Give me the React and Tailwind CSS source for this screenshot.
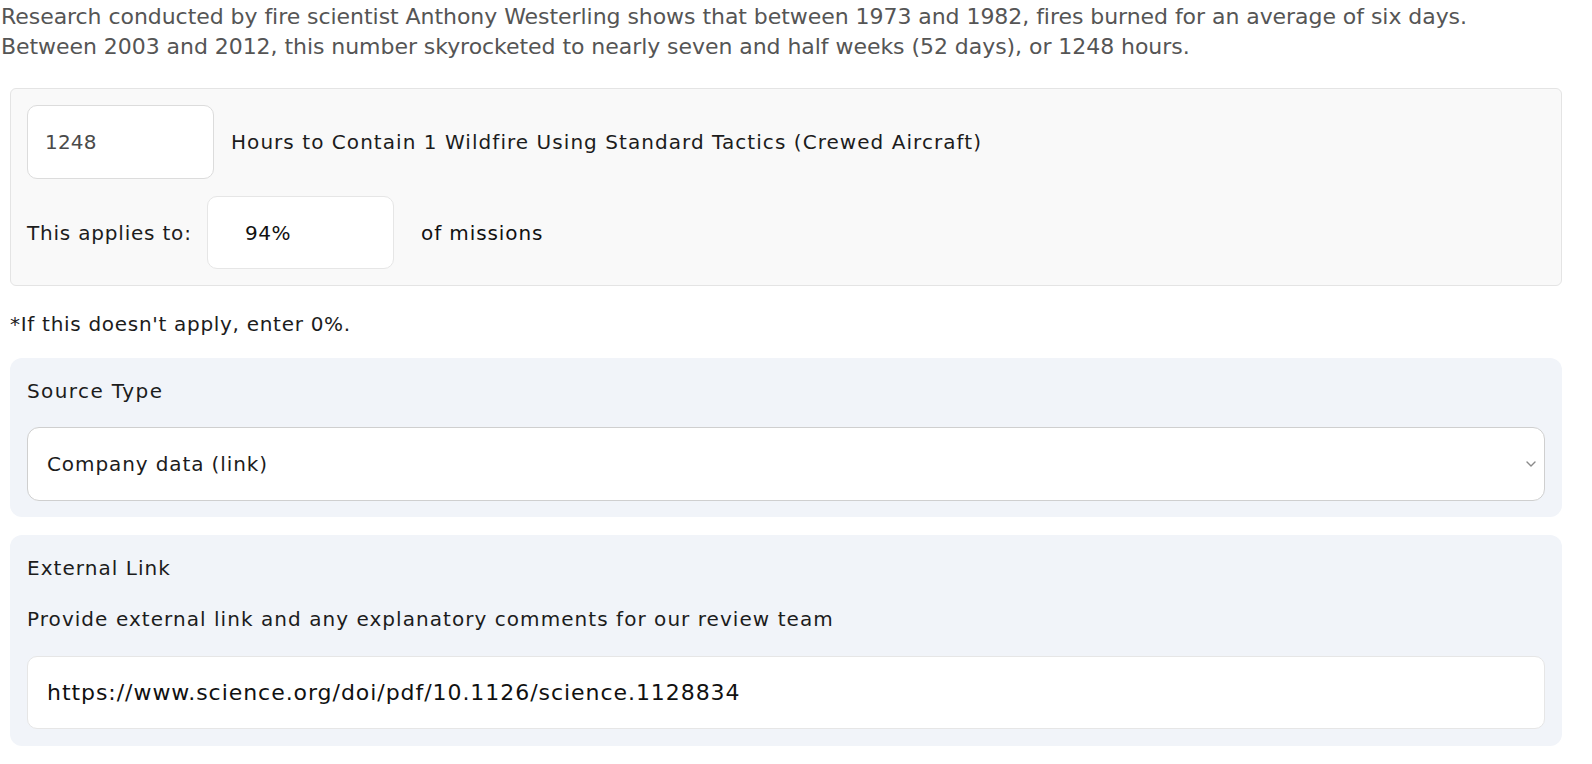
import React from 'react';

const Chevron = () => (
  <svg width="10" height="6" viewBox="0 0 10 6" fill="none" className="shrink-0">
    <path d="M1 1l4 4 4-4" stroke="#8a8a8a" strokeWidth="1.4" strokeLinecap="round" strokeLinejoin="round" />
  </svg>
);

export default function App() {
  return (
    <div className="w-full min-h-screen bg-white font-['DejaVu_Sans',sans-serif] text-[#1c1c1c]">
      {/* intro */}
      <p className="pt-[2px] pl-[1px] text-[22px] leading-[30px] tracking-[-0.05px] text-[#555555]">
        Research conducted by fire scientist Anthony Westerling shows that between 1973 and 1982, fires burned for an average of six days.
        <br />
        Between 2003 and 2012, this number skyrocketed to nearly seven and half weeks (52 days), or 1248 hours.
      </p>

      {/* hours box */}
      <div className="mt-[26px] ml-[10px] mr-[30px] rounded-md border border-[#e4e4e4] bg-[#f9f9f9] p-4 flex flex-col gap-[17px] text-[20px] tracking-[1.05px]">
        <div className="flex items-center gap-[17px]">
          <div className="w-[187px] h-[74px] rounded-[10px] border border-[#dcdcdc] bg-white flex items-center pl-[17px] text-[#4a4a4a] tracking-[0.2px]">
            1248
          </div>
          <span>Hours to Contain 1 Wildfire Using Standard Tactics (Crewed Aircraft)</span>
        </div>
        <div className="flex items-center">
          <span className="w-[180px] tracking-[0.8px]">This applies to:</span>
          <div className="w-[187px] h-[73px] rounded-[10px] border border-[#e6e6e6] bg-white flex items-center pl-[37px] text-[#111] tracking-[0.5px]">
            94%
          </div>
          <span className="ml-[27px] text-[#111] tracking-[0.9px]">of missions</span>
        </div>
      </div>

      <p className="ml-[10px] mt-[25px] text-[20px] leading-[26px] tracking-[0.7px]">*If this doesn't apply, enter 0%.</p>

      {/* source type */}
      <div className="mt-[21px] ml-[10px] mr-[30px] rounded-xl bg-[#f1f4f9] px-[17px] pt-[20px] pb-4 text-[20px] tracking-[0.9px]">
        <div className="leading-[26px] tracking-[1.4px]">Source Type</div>
        <div className="mt-[23px] h-[74px] rounded-xl border border-[#cfcfcf] bg-white flex items-center justify-between pl-[19px] pr-[8px]">
          <span>Company data (link)</span>
          <Chevron />
        </div>
      </div>

      {/* external link */}
      <div className="mt-[18px] ml-[10px] mr-[30px] rounded-xl bg-[#f1f4f9] px-[17px] pt-[20px] pb-[17px] text-[20px] tracking-[1.05px]">
        <div className="leading-[26px]">External Link</div>
        <div className="mt-[25px] leading-[26px]">Provide external link and any explanatory comments for our review team</div>
        <div className="mt-[24px] h-[73px] rounded-[10px] border border-[#e6e6e6] bg-white flex items-center pl-[19px] text-[22px] tracking-[0.95px] text-[#111]">
          https://www.science.org/doi/pdf/10.1126/science.1128834
        </div>
      </div>
    </div>
  );
}
